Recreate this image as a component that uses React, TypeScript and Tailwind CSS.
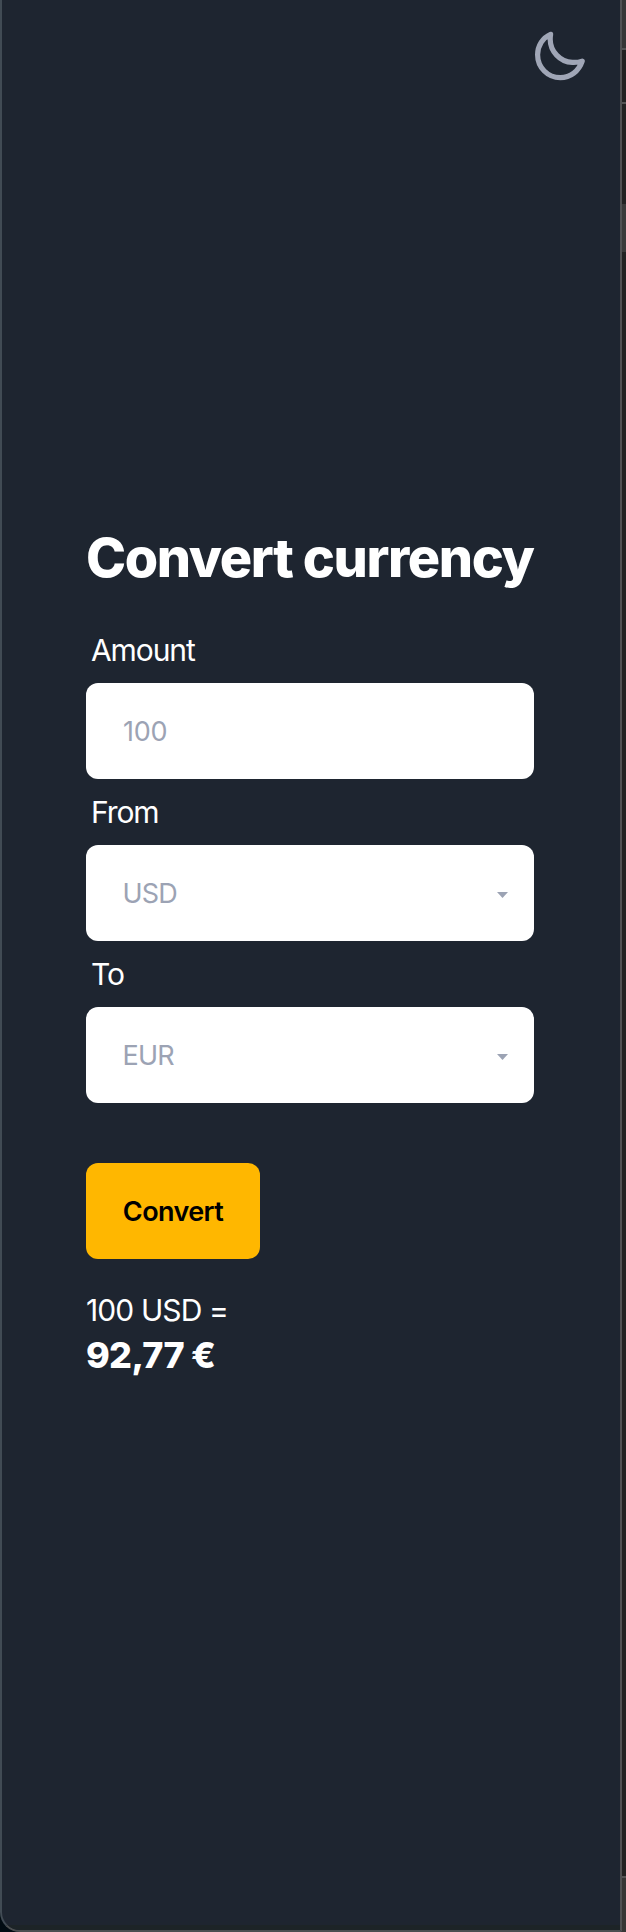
import { useState } from "react";

const label = "flex h-[66px] items-center pl-[5px] text-[30px] leading-[40px] tracking-[-1.1px]";

function MoonIcon() {
  return (
    <svg
      className="h-[56px] w-[56px] text-[#a0a6b6]"
      viewBox="0 0 56 56"
      fill="none"
      stroke="currentColor"
      strokeWidth="5.2"
      strokeLinecap="round"
      strokeLinejoin="round"
      aria-hidden="true"
    >
      <path d="M18.6 6.4C10.8 9.8 5.6 17.7 5.6 26.8C5.6 39.5 15.8 49.7 28.3 49.7C38.4 49.7 46.9 43 50.2 33.1C46.9 34.2 43.6 34.6 40.3 34.4C27.9 33.9 18.2 23.2 18.2 11.2C18.2 9.6 18.3 8 18.6 6.4Z" />
    </svg>
  );
}

function SelectBox({ value }: { value: string }) {
  return (
    <button
      type="button"
      className="flex h-24 w-full items-center justify-between rounded-xl bg-white pt-[2px] pr-[26px] pl-[36.5px] text-[27px] tracking-[-0.8px] text-[#9ca3b4]"
    >
      <span>{value}</span>
      <svg className="mt-[1px] h-[6px] w-[11px]" viewBox="0 0 11 6" fill="currentColor" aria-hidden="true">
        <path d="M0 0H11L5.5 6Z" />
      </svg>
    </button>
  );
}

export default function App() {
  const [amount, setAmount] = useState("");
  return (
    <div className="flex h-[1932px] w-[626px] bg-[#020c13] font-['Inter',sans-serif] text-white">
      <main className="flex w-[622px] shrink-0 flex-col overflow-hidden rounded-bl-[20px] border-r-2 border-b-2 border-l-2 border-r-[#505153] border-b-[#4b4e50] border-l-[#414b54] bg-[#1e2530]">
        <header className="flex h-[84px] shrink-0 items-end justify-end pr-[32px]">
          <button type="button" aria-label="Toggle theme">
            <MoonIcon />
          </button>
        </header>
        <div className="flex flex-1 flex-col pt-[444px] pl-[84px]">
          <div className="w-[448px]">
            <h1 className="mb-[29px] text-[54px] leading-[60px] font-extrabold tracking-[-1.38px] whitespace-nowrap">
              Convert currency
            </h1>
            <label className={label} htmlFor="amount">
              Amount
            </label>
            <input
              id="amount"
              value={amount}
              onChange={(e) => setAmount(e.target.value)}
              placeholder="100"
              className="block h-24 w-full rounded-xl bg-white px-[37px] text-[27px] tracking-[-0.3px] text-[#1e2530] outline-none placeholder:text-[#9ca3b4]"
            />
            <div className={label}>From</div>
            <SelectBox value="USD" />
            <div className={label}>To</div>
            <SelectBox value="EUR" />
            <button
              type="button"
              className="mt-[60px] flex h-24 w-[174px] items-center justify-center rounded-xl bg-[#ffb700] pt-[2px] text-[27px] font-semibold tracking-[-0.6px] text-black"
            >
              Convert
            </button>
            <p className="mt-[31px] text-[30px] leading-[40px] tracking-[-0.9px]">100 USD =</p>
            <p className="text-[36px] leading-[50px] font-extrabold tracking-[-0.7px]">92,77 €</p>
          </div>
        </div>
        <div className="h-[5px] shrink-0 bg-[#1d2427]" />
      </main>
      <aside className="flex w-1 flex-col bg-[#222222]">
        <div className="h-[50px] border-b-2 border-[#545454] bg-[#363636]" />
        <div className="h-[54px] border-b-2 border-[#545454]" />
        <div className="mt-[100px] h-[48px] bg-[#3a3a3a]" />
        <div className="flex-1" />
        <div className="h-[56px] border-t-2 border-[#545454] bg-[#373635]" />
      </aside>
    </div>
  );
}
